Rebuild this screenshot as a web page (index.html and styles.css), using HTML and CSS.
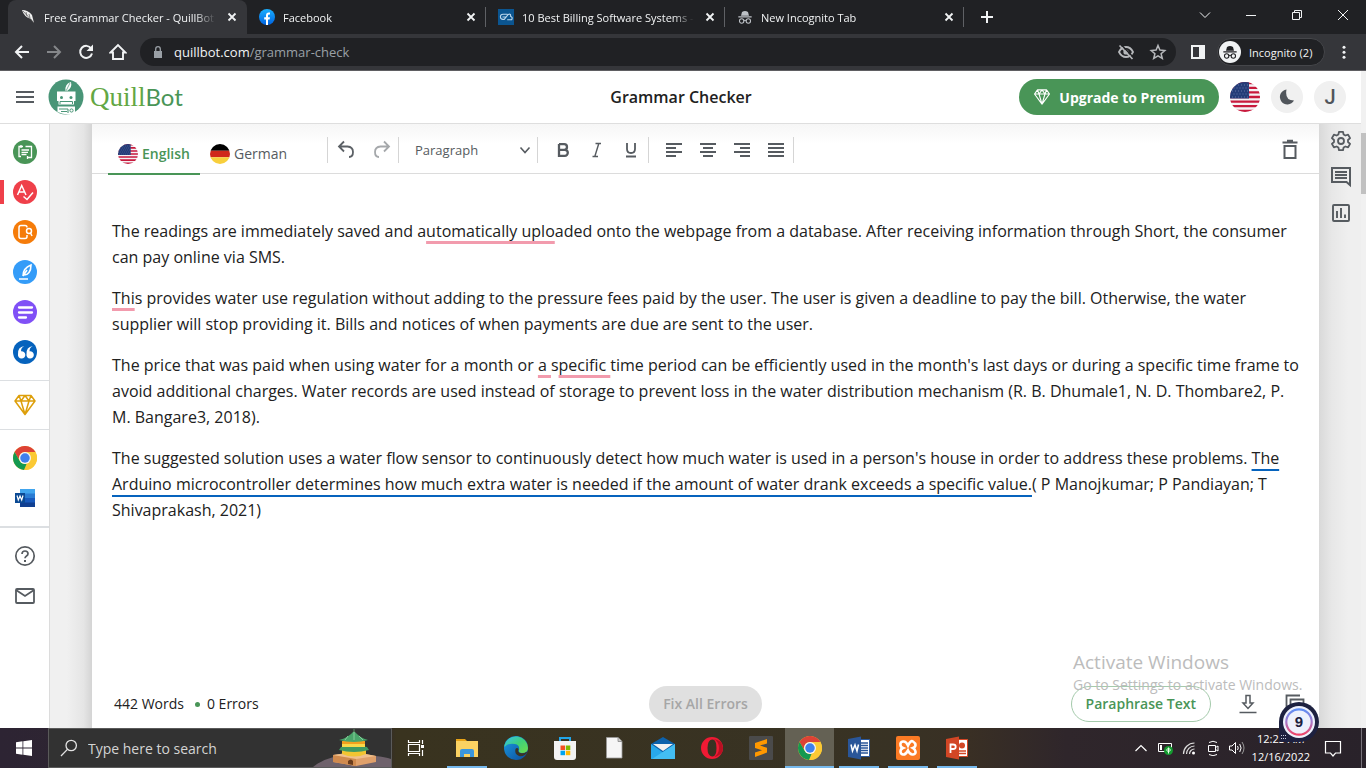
FILE: index.html
```
<!DOCTYPE html>
<html lang="en">
<head>
<meta charset="utf-8">
<meta name="viewport" content="width=device-width, initial-scale=1">
<title>Free Grammar Checker - QuillBot</title>
<link rel="stylesheet" href="styles.css">
</head>
<body>
<svg class="defs" width="0" height="0" aria-hidden="true">
  <defs>
    <clipPath id="disc"><circle cx="15" cy="15" r="15"/></clipPath>
    <linearGradient id="fb" x2="0" y2="1"><stop stop-color="#19afff"/><stop offset="1" stop-color="#0062e0"/></linearGradient>
    <linearGradient id="edge" x2="1" y2="1"><stop stop-color="#35c1f1"/><stop offset=".5" stop-color="#3fd07a"/><stop offset="1" stop-color="#6fdc4a"/></linearGradient>
    <linearGradient id="edgeb" x2="1" y2="1"><stop stop-color="#1b9de2"/><stop offset="1" stop-color="#0c4a9b"/></linearGradient>
    <linearGradient id="ring" x2="0" y2="1"><stop stop-color="#5f8ff5"/><stop offset=".5" stop-color="#a678c8"/><stop offset="1" stop-color="#f04468"/></linearGradient>
    <symbol id="x" viewBox="0 0 16 16"><path d="M4.500 4.500l7 7m0-7l-7 7" stroke="currentColor" stroke-width="1.800" fill="none"/></symbol>
    <symbol id="us" viewBox="0 0 30 30"><g clip-path="url(#disc)"><path fill="#f4f2f4" d="M0 0h30v30H0z"/><path stroke="#c8193c" stroke-width="2.300" d="M0 1.200h30M0 5.800h30M0 10.400h30M0 15h30M0 19.600h30M0 24.200h30M0 28.800h30"/><path fill="#243c78" d="M0 0h19v16.500H0z"/><path stroke="#6474a6" stroke-width="1" stroke-dasharray="1 2" d="M2 3h17M3.500 6h16M2 9h17M3.500 12h16M2 15h17"/></g></symbol>
    <symbol id="de" viewBox="0 0 30 30"><g clip-path="url(#disc)"><path d="M0 0h30v10H0z"/><path fill="#d0281c" d="M0 10h30v10H0z"/><path fill="#f8cf3c" d="M0 20h30v10H0z"/></g></symbol>
    <symbol id="gem" viewBox="0 0 24 24"><path d="M6 2.500h12l4 5.500-10 13.500L2 8zM2 8h20M6 2.500L8 8l4 13.500L16 8l2-5.500M8 8l4-5.500L16 8" fill="none" stroke="currentColor" stroke-width="1.500" stroke-linejoin="round"/></symbol>
    <symbol id="chrome" viewBox="0 0 48 48"><circle cx="24" cy="24" r="24" fill="#fbc934"/><path fill="#dd4236" d="M3.200 12A24 24 0 0 1 44.800 12H24a12 12 0 0 0-10.400 6L11 25.500z"/><path fill="#149950" d="M3.200 12l10.400 18A12 12 0 0 0 24 36h3l-5 11.900A24 24 0 0 1 3.200 12z"/><path fill="#fbc934" d="M44.800 12A24 24 0 0 1 23 48l11.400-18A12 12 0 0 0 24 12z"/><circle cx="24" cy="24" r="12" fill="#f5f5f5"/><circle cx="24" cy="24" r="9.500" fill="#3f80ec"/></symbol>
    <symbol id="spy" viewBox="0 0 24 24"><path d="M7.500 4.500Q12 1.500 16.500 4.500L18 10H6zM2 11h20v1.700H2z" fill="currentColor"/><g fill="none" stroke="currentColor" stroke-width="1.600"><circle cx="7" cy="18" r="3.300"/><circle cx="17" cy="18" r="3.300"/><path d="M10 17.500q2-1.200 4 0"/></g></symbol>
  </defs>
</svg>

<header class="browser">
  <div class="tabstrip">
    <div class="tab tab-active">
      <svg class="i16" viewBox="0 0 16 16"><path d="M2 1q6 0 10 5l2 8-3-4Q4 8 2 1z" fill="#f0f0f0"/><path d="M3 2l11 12M6 3l1 4M9 5l1 4" stroke="#555" stroke-width=".7"/></svg>
      <span class="tab-title">Free Grammar Checker - QuillBot</span>
      <button class="plain" aria-label="Close tab"><svg class="i16"><use href="#x"/></svg></button>
    </div>
    <div class="tab">
      <svg class="i16" viewBox="0 0 16 16"><circle cx="8" cy="8" r="8" fill="url(#fb)"/><path d="M7 16v-5.500H5.200V8.200H7V6.500Q7 3.600 9.700 3.600h1.300v2H10Q9 5.600 9 6.600v1.600h2l-.4 2.300H9V16z" fill="#fff"/></svg>
      <span class="tab-title">Facebook</span>
      <button class="plain" aria-label="Close tab"><svg class="i16"><use href="#x"/></svg></button>
    </div>
    <div class="tab">
      <svg class="i16" viewBox="0 0 16 16"><path fill="#0b5590" d="M0 0h16v16H0z"/><path d="M9.500 5.200H5a2.600 2.600 0 0 0 0 5.200h1.200l4-5q3-1 2.300 1.800 2.500.8 1.200 3.500H9.200M4.500 8h3.300" fill="none" stroke="#bcd8ee" stroke-width="1.100"/></svg>
      <span class="tab-title">10 Best Billing Software Systems -</span>
      <button class="plain" aria-label="Close tab"><svg class="i16"><use href="#x"/></svg></button>
    </div>
    <div class="tab">
      <svg class="i16 spy-tab"><use href="#spy"/></svg>
      <span class="tab-title">New Incognito Tab</span>
      <button class="plain" aria-label="Close tab"><svg class="i16"><use href="#x"/></svg></button>
    </div>
    <button class="plain new-tab" aria-label="New tab"><svg class="i16" viewBox="0 0 16 16"><path d="M8 2v12M2 8h12" stroke="currentColor" stroke-width="2"/></svg></button>
    <div class="window-buttons">
      <button class="plain" aria-label="Search tabs"><svg class="i16" viewBox="0 0 16 16"><path d="M3 5.500l5 5 5-5" fill="none" stroke="currentColor"/></svg></button>
      <button class="plain" aria-label="Minimize"><svg class="i16" viewBox="0 0 16 16"><path d="M3 8.500h10" stroke="currentColor"/></svg></button>
      <button class="plain" aria-label="Restore"><svg class="i16" viewBox="0 0 16 16"><path d="M3.500 5.500h7v7h-7zM5.500 5.500v-2h7v7h-2" fill="none" stroke="currentColor"/></svg></button>
      <button class="plain" aria-label="Close window"><svg class="i16" viewBox="0 0 16 16"><path d="M3 3l10 10M13 3L3 13" stroke="currentColor"/></svg></button>
    </div>
  </div>
  <div class="navbar">
    <button class="plain nav" aria-label="Back"><svg class="i18" viewBox="0 0 18 18"><path d="M16 9H3M9 3L3 9l6 6" fill="none" stroke="currentColor" stroke-width="2"/></svg></button>
    <button class="plain nav dim" aria-label="Forward"><svg class="i18" viewBox="0 0 18 18"><path d="M2 9h13M9 3l6 6-6 6" fill="none" stroke="currentColor" stroke-width="2"/></svg></button>
    <button class="plain nav" aria-label="Reload"><svg class="i18" viewBox="0 0 18 18"><path d="M14.200 5.500A6 6 0 1 0 15 10.500" fill="none" stroke="currentColor" stroke-width="2"/><path d="M16 1.500v6.500H9.500z" fill="currentColor"/></svg></button>
    <button class="plain nav" aria-label="Home"><svg class="i18" viewBox="0 0 18 18"><path d="M1.500 9.500L9 2l7.500 7.500H14V16H4V9.500z" fill="none" stroke="currentColor" stroke-width="1.900"/></svg></button>
    <div class="address">
      <svg class="i12" viewBox="0 0 12 12"><path fill="#9aa0a6" d="M2 5h8v7H2z"/><path d="M3.700 6V3a2.300 2.300 0 0 1 4.600 0v3" fill="none" stroke="#9aa0a6" stroke-width="1.300"/></svg>
      <p class="url">quillbot.com<span>/grammar-check</span></p>
      <button class="plain nav soft" aria-label="Third-party cookies blocked"><svg class="i18" viewBox="0 0 18 18"><path d="M2 9q2.500-5 7-5t7 5q-2.500 5-7 5T2 9z" fill="none" stroke="currentColor" stroke-width="1.800"/><circle cx="9" cy="9" r="2.600" fill="currentColor"/><path d="M4 1.500L17 15" stroke="#202124" stroke-width="1.500"/><path d="M2.500 2.500L15.500 16" stroke="currentColor" stroke-width="1.700"/></svg></button>
      <button class="plain nav soft" aria-label="Bookmark"><svg class="i18" viewBox="0 0 18 18"><path d="M9 2.500l1.900 4.600 4.900.4-3.700 3.200 1.200 4.800L9 12.900l-4.300 2.600 1.200-4.800-3.700-3.200 4.900-.4z" fill="none" stroke="currentColor" stroke-width="1.500"/></svg></button>
    </div>
    <button class="plain nav" aria-label="Side panel"><svg class="i16" viewBox="0 0 16 16"><path fill="currentColor" fill-rule="evenodd" d="M1 1h14v14H1zm2 2v10h6V3z"/></svg></button>
    <button class="profile"><span class="profile-icon"><svg class="i16"><use href="#spy"/></svg></span>Incognito (2)</button>
    <button class="plain nav" aria-label="Menu"><svg class="i16" viewBox="0 0 16 16"><g fill="currentColor"><circle cx="8" cy="3.200" r="1.500"/><circle cx="8" cy="8.200" r="1.500"/><circle cx="8" cy="13.200" r="1.500"/></g></svg></button>
  </div>
</header>

<div class="viewport">
<div class="app">
  <header class="app-header">
    <div class="brand">
      <button class="plain" aria-label="Open navigation"><svg class="i18" viewBox="0 0 18 18"><path d="M0 4h18M0 9h18M0 14h18" stroke="#565b60" stroke-width="1.800"/></svg></button>
      <a class="logo" href="#" aria-label="QuillBot">
        <svg class="robot" viewBox="0 0 36 36"><circle cx="18" cy="18" r="17.500" fill="#499577"/><path d="M17.500 12q-1-7 5.500-9 1.500 6-4 9z" fill="#fff"/><path d="M18 12l4-8" stroke="#499577" stroke-width=".7"/><path d="M9 12.500h18.500V22H26v3.500H10.500V22H9z" fill="#fff"/><path d="M12 25v-2.500h12.500V25" fill="none" stroke="#499577"/><g fill="#499577"><circle cx="13.500" cy="18.500" r="1.500"/><circle cx="23" cy="18.500" r="1.500"/></g><path d="M9.500 27.500h17.500v7Q18 37 9.500 33z" fill="#fff"/><path d="M11 30h9M13 32.500h6M20 30v4" stroke="#499577" stroke-width="1.100"/><circle cx="23.500" cy="31.500" r="1.600" fill="none" stroke="#499577"/></svg>
        <span class="wordmark">Quill<b>Bot</b></span>
      </a>
    </div>
    <h1>Grammar Checker</h1>
    <div class="account">
      <button class="upgrade"><svg class="i18"><use href="#gem"/></svg>Upgrade to Premium</button>
      <button class="plain" aria-label="Language"><svg class="flag-lg"><use href="#us"/></svg></button>
      <button class="round" aria-label="Dark mode"><svg class="i18" viewBox="0 0 18 18"><path d="M8.500 1.500A7.500 7.500 0 1 0 16 12.500Q6.500 12.500 8.500 1.500z" fill="#50555b"/></svg></button>
      <button class="round">J</button>
    </div>
  </header>

  <div class="workspace">
    <nav class="sidebar" aria-label="Tools">
      <div class="tools">
        <a href="#" aria-label="Paraphraser"><svg class="i24" viewBox="0 0 24 24"><circle cx="12" cy="12" r="12" fill="#499557"/><g fill="none" stroke="#fff" stroke-width="1.300"><path d="M10 6.500H6v10h2M14 17.500h4.500v-11h-6M8 5v3M14.500 16v3"/><path d="M8.500 10H16M8.500 12.300H15M8.500 14.500h5"/></g></svg></a>
        <a href="#" class="current" aria-label="Grammar checker"><svg class="i24" viewBox="0 0 24 24"><circle cx="12" cy="12" r="12" fill="#ef404a"/><path d="M4.500 15L8.700 5.500 13 15M6 12h5.500M10.500 16.500l3.500 3 6-7" fill="none" stroke="#fff" stroke-width="1.500"/></svg></a>
        <a href="#" aria-label="Plagiarism checker"><svg class="i24" viewBox="0 0 24 24"><circle cx="12" cy="12" r="12" fill="#f57c0a"/><g fill="none" stroke="#fff" stroke-width="1.500"><path d="M14 7.500Q14 5.500 12 5.500H8q-2 0-2 2v9q0 2 2 2h4q2 0 2-2V15"/><circle cx="16" cy="11" r="2.500"/><path d="M17.500 13l1.500 3"/></g></svg></a>
        <a href="#" aria-label="Co-writer"><svg class="i24" viewBox="0 0 24 24"><circle cx="12" cy="12" r="12" fill="#349cf8"/><path d="M10 16q0-8 8-11 0 5-2 7.500T11.500 15M10 16l4-6M6 19h9" fill="none" stroke="#fff" stroke-width="1.600"/></svg></a>
        <a href="#" aria-label="Summarizer"><svg class="i24" viewBox="0 0 24 24"><circle cx="12" cy="12" r="12" fill="#8050f6"/><path d="M6 7.500h13M6 12.500h13M6 17.500h7" stroke="#fff" stroke-width="2.300" stroke-linecap="round"/></svg></a>
        <a href="#" aria-label="Citation generator"><svg class="i24" viewBox="0 0 24 24"><circle cx="12" cy="12" r="12" fill="#0663bd"/><path d="M11.300 6Q8 7.500 8 11.200a3.700 3.700 0 1 1-3 3Q4.500 7 11.300 6zM19.800 6q-3.300 1.500-3.300 5.200a3.700 3.700 0 1 1-3 3Q13 7 19.800 6z" fill="#fff"/></svg></a>
      </div>
      <div class="premium"><a href="#" aria-label="Premium"><svg class="i24"><use href="#gem"/></svg></a></div>
      <div class="extensions">
        <a href="#" aria-label="Chrome extension"><svg class="i24"><use href="#chrome"/></svg></a>
        <a href="#" aria-label="Word add-in"><svg class="i24" viewBox="0 0 24 24"><path fill="#41a5ee" d="M7 3h15v5H7z"/><path fill="#2b7cd3" d="M7 7.500h15v5H7z"/><path fill="#185abd" d="M7 12h15v5H7z"/><path fill="#103f91" d="M7 16.500h15V21H7z"/><path fill="#0b4a94" d="M2 7h10v10H2z"/><path d="M4 9.500L5.300 14 7 10l1.700 4L10 9.500" fill="none" stroke="#fff" stroke-width="1.200"/></svg></a>
      </div>
      <div class="support">
        <a href="#" aria-label="Help"><svg class="i24" viewBox="0 0 24 24"><circle cx="12" cy="12" r="9.200" fill="none" stroke="#565b60" stroke-width="1.700"/><path d="M9 10q0-3 3-3t3 2.700q0 1.300-1.500 2.300T12 14.300" fill="none" stroke="#565b60" stroke-width="1.700"/><path stroke="#565b60" stroke-width="2" d="M12 16v2"/></svg></a>
        <a href="#" aria-label="Contact"><svg class="i24" viewBox="0 0 24 24"><rect x="3" y="5" width="18" height="14" rx="1" fill="none" stroke="#565b60" stroke-width="1.800"/><path d="M3 6l9 6 9-6" fill="none" stroke="#565b60" stroke-width="1.800"/></svg></a>
      </div>
    </nav>

    <div class="gutter"></div>

    <main class="editor">
      <div class="toolbar">
        <div class="languages">
          <button class="lang lang-on"><svg class="flag"><use href="#us"/></svg>English</button>
          <button class="lang"><svg class="flag"><use href="#de"/></svg>German</button>
        </div>
        <div class="group history">
          <button class="plain" aria-label="Undo"><svg class="i20" viewBox="0 0 20 20"><path d="M8 1.500L3 6.500l5 5M3 6.500h8.500q5.500.5 5.500 5.500t-4 5" fill="none" stroke="#5c6166" stroke-width="1.800"/></svg></button>
          <button class="plain" aria-label="Redo"><svg class="i20" viewBox="0 0 20 20"><path d="M12 1.500l5 5-5 5M17 6.500H8.500Q3 7 3 12t4 5" fill="none" stroke="#a5a8ab" stroke-width="1.800"/></svg></button>
        </div>
        <div class="group style-pick">
          <select aria-label="Paragraph style"><option>Paragraph</option><option>Heading 1</option></select>
          <svg class="i12" viewBox="0 0 12 12"><path d="M1.500 3.500l4.500 5 4.500-5" fill="none" stroke="#565b60" stroke-width="1.600"/></svg>
        </div>
        <div class="group format">
          <button class="plain" aria-label="Bold"><svg class="i20" viewBox="0 0 20 20"><path d="M6 4.200h5.200a2.800 2.800 0 0 1 0 5.600H6m0 0h5.800a3 3 0 0 1 0 6H6V4" fill="none" stroke="#565b60" stroke-width="2.300"/></svg></button>
          <button class="plain" aria-label="Italic"><svg class="i20" viewBox="0 0 20 20"><path d="M8.500 3.500H14M5.500 16.500H11M11.800 3.500l-4 13" fill="none" stroke="#565b60" stroke-width="1.400"/></svg></button>
          <button class="plain" aria-label="Underline"><svg class="i20" viewBox="0 0 20 20"><path d="M6 3v6q0 4 4 4t4-4V3M5 16.500h10" fill="none" stroke="#565b60" stroke-width="1.800"/></svg></button>
        </div>
        <div class="group format">
          <button class="plain" aria-label="Align left"><svg class="i20" viewBox="0 0 20 20"><path d="M2 4h16M2 8h10M2 12h16M2 16h10" stroke="#565b60" stroke-width="1.800"/></svg></button>
          <button class="plain" aria-label="Align center"><svg class="i20" viewBox="0 0 20 20"><path d="M2 4h16M5 8h10M2 12h16M5 16h10" stroke="#565b60" stroke-width="1.800"/></svg></button>
          <button class="plain" aria-label="Align right"><svg class="i20" viewBox="0 0 20 20"><path d="M2 4h16M8 8h10M2 12h16M8 16h10" stroke="#565b60" stroke-width="1.800"/></svg></button>
          <button class="plain" aria-label="Justify"><svg class="i20" viewBox="0 0 20 20"><path d="M2 4h16M2 8h16M2 12h16M2 16h16" stroke="#565b60" stroke-width="1.800"/></svg></button>
        </div>
        <div class="group tail"></div>
        <button class="plain trash" aria-label="Delete text"><svg class="i24" viewBox="0 0 24 24"><path d="M4.500 4.500h15M9 2.800h6" stroke="#565b60" stroke-width="2"/><path d="M6.500 8h11v12h-11z" fill="none" stroke="#565b60" stroke-width="2"/></svg></button>
      </div>

      <div class="text" contenteditable="true" spellcheck="false">
        <p>The readings are immediately saved and a<u>utomatically uplo</u>aded onto the webpage from a database. After receiving information through Short, the consumer<br>can pay online via SMS.</p>
        <p><u>Thi</u>s provides water use regulation without adding to the pressure fees paid by the user. The user is given a deadline to pay the bill. Otherwise, the water<br>supplier will stop providing it. Bills and notices of when payments are due are sent to the user.</p>
        <p>The price that was paid when using water for a month or <u>a </u>s<u>pecific </u>time period can be efficiently used in the month's last days or during a specific time frame to<br>avoid additional charges. Water records are used instead of storage to prevent loss in the water distribution mechanism (R. B. Dhumale1, N. D. Thombare2, P.<br>M. Bangare3, 2018).</p>
        <p>The suggested solution uses a water flow sensor to continuously detect how much water is used in a person's house in order to address these problems. <u class="blue">The<br>Arduino microcontroller determines how much extra water is needed if the amount of water drank exceeds a specific value.</u>( P Manojkumar; P Pandiayan; T<br>Shivaprakash, 2021)</p>
      </div>

      <div class="editor-footer">
        <p class="counts"><span>442 Words</span><span>0 Errors</span></p>
        <button class="fix" disabled>Fix All Errors</button>
        <div class="actions">
          <button class="paraphrase">Paraphrase Text</button>
          <button class="plain" aria-label="Download"><svg class="i20" viewBox="0 0 20 20"><path d="M8 1.500h4V9h3l-5 5.500L5 9h3zM1.500 18.500h17" fill="none" stroke="#565b60" stroke-width="1.500"/></svg></button>
          <button class="plain" aria-label="Copy"><svg class="i20" viewBox="0 0 20 20"><path d="M1.500 15V1.500H15M5.500 5.500h13v13h-13z" fill="none" stroke="#565b60" stroke-width="1.800"/></svg></button>
        </div>
      </div>
    </main>

    <aside class="rail">
      <button class="plain" aria-label="Settings"><svg class="i24" viewBox="0 0 24 24"><path d="M10 2.800h4l.6 2.700 1.800 1 2.700-.8 2 3.400-2.100 1.900v2l2.100 1.900-2 3.400-2.700-.8-1.800 1-.6 2.700h-4l-.6-2.700-1.800-1-2.700.8-2-3.400L5 13v-2L2.900 9.100l2-3.400 2.700.8 1.800-1z" fill="none" stroke="#565b60" stroke-width="1.800" stroke-linejoin="round"/><circle cx="12" cy="12" r="3" fill="none" stroke="#565b60" stroke-width="1.800"/></svg></button>
      <button class="plain" aria-label="Comments"><svg class="i24" viewBox="0 0 24 24"><path d="M3 3h18v17l-3.500-3H3z" fill="none" stroke="#565b60" stroke-width="2"/><path d="M6 7h12M6 10h12M6 13h12" stroke="#565b60" stroke-width="1.800"/></svg></button>
      <button class="plain" aria-label="Statistics"><svg class="i24" viewBox="0 0 24 24"><rect x="4" y="4" width="16" height="16" rx="1" fill="none" stroke="#565b60" stroke-width="1.900"/><path d="M8 10v7M12 7v10M16 13.500V17" stroke="#565b60" stroke-width="1.900"/></svg></button>
    </aside>
  </div>
</div>
<div class="scrollbar"><div class="thumb"></div></div>
<div class="watermark"><strong>Activate Windows</strong><span>Go to Settings to activate Windows.</span></div>
<div class="badge"><svg viewBox="0 0 40 40"><path d="M20 0a20 20 0 1 1 0 40H4q-4 0-4-4V20A20 20 0 0 1 20 0z" fill="#1d2140"/><circle cx="20" cy="20" r="16" fill="#eef1fc"/><circle cx="20" cy="20" r="12.700" fill="none" stroke="url(#ring)" stroke-width="2.200"/><path d="M2 33.500h5M2 36.500h5" stroke="#c8cce0" stroke-width="1" stroke-dasharray="1 1"/></svg><span>9</span></div>
</div>

<footer class="taskbar">
  <button class="plain start" aria-label="Start"><svg class="i16" viewBox="0 0 16 16"><path d="M0 2.300l6.500-1v6.300H0zM7.300 1.200L16 0v7.600H7.300zM0 8.400h6.500v6.300L0 13.700zM7.300 8.400H16V16l-8.700-1.200z" fill="#fff"/></svg></button>
  <div class="search">
    <svg class="i18" viewBox="0 0 18 18"><circle cx="11.200" cy="6.500" r="5.200" fill="none" stroke="#e4e4e4" stroke-width="1.300"/><path d="M7.400 10.400L1 17" stroke="#e4e4e4" stroke-width="1.300"/></svg>
    <input type="text" placeholder="Type here to search" aria-label="Type here to search">
    <svg class="temple" viewBox="0 0 78 38"><path d="M0 38Q14 26 40 26t38 4v8z" fill="#6f626c"/><path d="M20 26l22-3 21 4v6l-20 4-23-4z" fill="#e0a06a"/><path d="M20 26l23 3v8l-23-4z" fill="#d08a4e"/><path d="M20 26l22-3 21 4-20 3z" fill="#f0c08c"/><path d="M29 19h24v6q-12 5-24 0z" fill="#f2c531"/><path d="M28 18l13-2 13 2 2 3q-15 4-30 0z" fill="#3f9a62"/><path d="M29 12h23v6H29z" fill="#f2a01e"/><path d="M29 15h23v3H29z" fill="#f9d849"/><path d="M26 11q9-2 15-9 6 7 14 9-14 4-29 0z" fill="#4aa66b"/><path d="M41 3v8M35 7l-3 4M46 7l4 4" stroke="#87cf9b"/><path d="M41 0v3" stroke="#4c6c50" stroke-width="1.500"/><path d="M35 35v-3q3-3 5 0v4z" fill="#6b3c1b"/></svg>
  </div>
  <button class="plain task-view" aria-label="Task view"><svg class="i18" viewBox="0 0 18 18"><path d="M1.500 1v2.500h11V1M1.500 17v-2.500h11V17M1.500 5.500h11v7h-11zM15.500 1v4M15.500 11v6" fill="none" stroke="#fff" stroke-width="1.200"/><path d="M14 6h3v3h-3z" fill="#fff"/></svg></button>
  <button class="plain app-icon open" aria-label="File Explorer"><svg class="i24" viewBox="0 0 24 24"><path fill="#e8a317" d="M1 3h9l2 2H1z"/><path fill="#fbd262" d="M1 5h22v16H1z"/><path d="M5 21v-6q0-2 2-2h10q2 0 2 2v6h-4v-3H9v3z" fill="#3a96dd"/></svg></button>
  <button class="plain app-icon" aria-label="Edge"><svg class="i24" viewBox="0 0 24 24"><circle cx="12" cy="12" r="12" fill="url(#edgeb)"/><path d="M.5 9A12 12 0 0 1 24 12q0 5-6 5-4 0-3-3 1-5-4-6Q5 6.500.5 11z" fill="url(#edge)"/><path d="M14.500 13q-1.500 4 3.500 4.300 3 0 4.500-1.500l.5 1Q20 21 15 20q-5-2-3.500-7 1.500-2 3 0z" fill="#3a3426"/></svg></button>
  <button class="plain app-icon" aria-label="Microsoft Store"><svg class="i24" viewBox="0 0 24 24"><path d="M7 6V2h10v4" fill="none" stroke="#22a5e8" stroke-width="2"/><path d="M1 5h22v16q0 3-3 3H4q-3 0-3-3z" fill="#f3f3f3"/><path fill="#f25022" d="M7.500 9.500H12V14H7.500z"/><path fill="#7fba00" d="M12.800 9.500h4.500V14h-4.500z"/><path fill="#00a4ef" d="M7.500 14.700H12v4.500H7.500z"/><path fill="#ffb900" d="M12.800 14.700h4.500v4.500h-4.500z"/></svg></button>
  <button class="plain app-icon" aria-label="Document"><svg class="i24" viewBox="0 0 24 24"><path d="M4.500 1.500H16l4 4V22H4.500z" fill="#f5f5f5" stroke="#999" stroke-width=".8"/><path d="M16 1.500v4h4" fill="#ccc" stroke="#888" stroke-width=".8"/></svg></button>
  <button class="plain app-icon" aria-label="Mail"><svg class="i24" viewBox="0 0 24 24"><path d="M0 8l12-7 12 7v15H0z" fill="#0d62ac"/><path d="M0 8l12 8.500L24 8v15H0z" fill="#28a8ea"/><path d="M24 8v15H1z" fill="#43bdf3"/><path d="M2 8h20l-10 7z" fill="#f2f2f2"/></svg></button>
  <button class="plain app-icon" aria-label="Opera"><svg class="i24" viewBox="0 0 24 24"><path fill="#f01a34" fill-rule="evenodd" d="M12 1a11 11 0 1 1 0 22 11 11 0 0 1 0-22zm0 2.500Q7.500 4 7.500 12t4.500 8.500 4.500-8.500T12 3.500z"/><path d="M13 3Q19 5 19 12t-6 9q10-1 10-9T13 3z" fill="#b81022"/></svg></button>
  <button class="plain app-icon" aria-label="Sublime Text"><svg class="i24" viewBox="0 0 24 24"><rect width="24" height="24" rx="1" fill="#4a4a4a"/><path d="M6 7l12-4v4.500l-7 2 7 2.300v4.700L6 21v-4.500l7-2.200-7-2.300z" fill="#ff9800"/></svg></button>
  <button class="plain app-icon open active" aria-label="Chrome"><svg class="i24"><use href="#chrome"/></svg></button>
  <button class="plain app-icon open" aria-label="Word"><svg class="i24" viewBox="0 0 24 24"><path fill="#fff" stroke="#2a5699" d="M12 3.500h10.500v17H12z"/><path d="M13 7h8M13 9.500h8M13 12h8M13 14.500h8M13 17h8" stroke="#2a5699" stroke-width="1.300"/><path d="M1 3l13-2.500v23L1 21z" fill="#2a5699"/><path d="M4 8.500L5.500 15 8 9l2 6 1.500-6.500" fill="none" stroke="#fff" stroke-width="1.500"/></svg></button>
  <button class="plain app-icon open" aria-label="XAMPP"><svg class="i24" viewBox="0 0 24 24"><rect width="24" height="24" rx="2" fill="#fb7a24"/><path d="M12 9.500Q10 5 7 5.500T4.500 9q0 2 2.500 3-2.500 1-2.500 3.500t2.500 3 5-4q2 4.500 5 4t2.500-3T17 12q2.500-1 2.500-3T17 5.500t-5 4z" fill="none" stroke="#fff" stroke-width="2.600"/></svg></button>
  <button class="plain app-icon open" aria-label="PowerPoint"><svg class="i24" viewBox="0 0 24 24"><path fill="#fff" stroke="#d24625" d="M12 3.500h10.500v17H12z"/><circle cx="17" cy="9.500" r="3" fill="#d24625"/><path d="M14 15h7M14 17.500h7" stroke="#d24625" stroke-width="1.300"/><path d="M1 3l13-2.500v23L1 21z" fill="#d24625"/><path d="M5.500 17V8.500H8q2.700 0 2.700 2.300T8 13H5.500" fill="none" stroke="#fff" stroke-width="1.800"/></svg></button>
  <div class="tray">
    <button class="plain" aria-label="Show hidden icons"><svg class="i16" viewBox="0 0 16 16"><path d="M2.500 11L8 5.500l5.500 5.500" fill="none" stroke="#fff" stroke-width="1.200"/></svg></button>
    <button class="plain" aria-label="Battery"><svg class="i16" viewBox="0 0 16 16"><path d="M1.500 3.500h13v8h-13z" fill="none" stroke="#fff"/><path d="M3 5h2v5H3z" fill="#fff"/><circle cx="11.500" cy="10.500" r="4.500" fill="#149a2f"/><path d="M11.500 7.500v6M9.500 10l2-2 2 2-2 2z" fill="none" stroke="#e5ffe5"/></svg></button>
    <button class="plain" aria-label="Network"><svg class="i16" viewBox="0 0 16 16"><path d="M2.500 14A11 11 0 0 1 13.500 3M5.500 14a8 8 0 0 1 8-8M8.500 14a5 5 0 0 1 5-5" fill="none" stroke="#ddd" stroke-width="1.200"/><circle cx="12.500" cy="13" r="1.500" fill="#fff"/></svg></button>
    <button class="plain" aria-label="Meet Now"><svg class="i16" viewBox="0 0 16 16"><path d="M3.500 5.500h7v6h-7zM10.500 7.500L13 6v5l-2.500-1.500M4 2.500q4-2.500 8 0M4 14.500q4 2.500 8 0" fill="none" stroke="#fff"/></svg></button>
    <button class="plain" aria-label="Volume"><svg class="i16" viewBox="0 0 16 16"><path d="M.5 6v4H3l3.500 3.500v-11L3 6zM8.500 6q1.500 2 0 4M10.700 4q2.800 4 0 8" fill="none" stroke="#fff"/><path d="M13 2q4 6 0 12" fill="none" stroke="#999"/></svg></button>
    <p class="clock"><span>12:23 AM</span><span>12/16/2022</span></p>
    <button class="plain notices" aria-label="Notifications"><svg class="i18" viewBox="0 0 18 18"><path d="M1.500 2.500h15v11.500h-5L9 17l-2.500-3h-5z" fill="none" stroke="#fff" stroke-width="1.200"/></svg></button>
  </div>
</footer>
</body>
</html>
```

FILE: styles.css
```
* { box-sizing: border-box; }

body {
  margin: 0;
  min-height: 100vh;
  display: flex;
  flex-direction: column;
  font-family: "Open Sans", "Noto Sans", sans-serif;
  font-size: 14px;
  color: #212121;
  background: #fff;
}

p, h1 { margin: 0; }
button, input, select { font: inherit; color: inherit; }
a { display: flex; color: inherit; text-decoration: none; }
svg { display: block; flex: none; }
.defs { position: absolute; }

.i12 { width: 12px; height: 12px; }
.i16 { width: 16px; height: 16px; }
.i18 { width: 18px; height: 18px; }
.i20 { width: 20px; height: 20px; }
.i24 { width: 24px; height: 24px; }

.plain {
  display: flex;
  align-items: center;
  justify-content: center;
  padding: 0;
  border: 0;
  background: none;
}

/* Browser frame */
.browser { color: #f1f3f4; font-size: 11px; }
.tabstrip { display: flex; height: 34px; padding-left: 8px; background: #202124; }
.tab {
  display: flex;
  align-items: center;
  gap: 8px;
  flex: 0 1 239px;
  min-width: 0;
  padding: 0 7px 0 12px;
  background: linear-gradient(#5f6165, #5f6165) right center / 1px 20px no-repeat;
}
.tab-active { background: #35363a; border-radius: 8px 8px 0 0; }
.tab-title {
  flex: 1;
  min-width: 0;
  overflow: hidden;
  white-space: nowrap;
  mask-image: linear-gradient(90deg, #000 88%, transparent);
}
.spy-tab { color: #bdc1c6; }
.new-tab { width: 46px; }
.window-buttons { display: flex; margin-left: auto; }
.window-buttons button { width: 46px; height: 30px; }

.navbar {
  display: flex;
  align-items: center;
  height: 37px;
  padding: 0 6px;
  background: #35363a;
  border-bottom: 1px solid #5f5e62;
}
.nav { width: 32px; height: 28px; }
.dim { color: #85878a; }
.soft { color: #b6b8bb; }
.address {
  display: flex;
  align-items: center;
  flex: 1;
  height: 28px;
  margin: 0 6px;
  padding: 0 2px 0 12px;
  border-radius: 14px;
  background: #202124;
}
.url { flex: 1; margin-left: 10px; font-size: 13px; }
.url span { color: #9aa0a6; }
.profile {
  display: flex;
  align-items: center;
  gap: 8px;
  height: 28px;
  min-width: 108px;
  margin: 0 3px;
  padding: 0 10px 0 1px;
  border: 1px solid #45464a;
  border-radius: 14px;
  background: #202124;
}
.profile-icon {
  display: grid;
  place-items: center;
  width: 22px;
  height: 22px;
  border-radius: 50%;
  background: #f1f3f4;
  color: #202124;
}

/* Page */
.viewport { position: relative; flex: 1; display: flex; }
.app { flex: 1; min-width: 0; display: flex; flex-direction: column; }
.scrollbar { width: 5px; padding-top: 62px; background: #f1f1f1; }
.thumb { height: 61px; background: #c1c1c1; }

.app-header {
  display: grid;
  grid-template-columns: 1fr auto 1fr;
  align-items: center;
  height: 53px;
  padding: 0 15px 0 16px;
  border-bottom: 1px solid #dedede;
}
.app-header h1 { font-size: 16px; font-weight: 600; line-height: 24px; }
.brand { display: flex; align-items: center; gap: 14px; }
.logo { align-items: center; gap: 6px; }
.robot { width: 36px; height: 36px; }
.wordmark { font: 27px/36px "Liberation Serif", serif; color: #63a744; }
.wordmark b { font: 24px/36px Lato, sans-serif; color: #499557; }
.account { display: flex; align-items: center; justify-content: flex-end; gap: 11px; }
.upgrade {
  display: flex;
  align-items: center;
  gap: 8px;
  height: 36px;
  padding: 0 14px;
  border: 0;
  border-radius: 18px;
  background: #499557;
  color: #fff;
  font-weight: 700;
  white-space: nowrap;
}
.flag-lg { width: 30px; height: 30px; }
.round {
  display: grid;
  place-items: center;
  width: 32px;
  height: 32px;
  padding: 0;
  border: 0;
  border-radius: 50%;
  background: #f0f0f0;
  color: #50555b;
  font: 500 20px/24px Roboto, sans-serif;
}

.workspace { flex: 1; display: flex; }
.sidebar { width: 50px; border-right: 1px solid #dcdcdc; }
.sidebar > div {
  display: flex;
  flex-direction: column;
  align-items: center;
  border-bottom: 1px solid #dcdfe2;
}
.sidebar .tools { gap: 16px; padding: 16px 0; }
.tools a { width: 100%; justify-content: center; }
.tools .current { background: linear-gradient(#ef404a, #ef404a) left / 4px 24px no-repeat; }
.sidebar .premium { padding: 12px 0; color: #dd9f0b; }
.sidebar .extensions { gap: 16px; padding: 16px 0; border-bottom-width: 2px; }
.sidebar .support { gap: 16px; padding: 16px 0; border-bottom: 0; }
.gutter { width: 42px; background: linear-gradient(90deg, #f0f0f0 40%, #e5e5e5 80%, #d4d4d4); }
.rail {
  display: flex;
  flex-direction: column;
  align-items: center;
  gap: 12px;
  width: 42px;
  padding: 5px 0 0 2px;
  background: linear-gradient(90deg, #d9d9d9, #e7e7e7 30%, #efefef 70%);
}

.editor {
  flex: 1;
  min-width: 0;
  display: flex;
  flex-direction: column;
  background: linear-gradient(#f6f6f6, #fff 20px);
}
.toolbar {
  display: flex;
  align-items: center;
  height: 50px;
  padding: 2px 17px 0 16px;
  border-bottom: 1px solid #dcdcdc;
  color: #565b60;
}
.languages { display: flex; align-self: stretch; margin-right: 35px; }
.lang {
  display: flex;
  align-items: center;
  gap: 4px;
  width: 92px;
  height: 49px;
  padding: 8px 10px 0;
  border: 0;
  border-bottom: 2px solid transparent;
  background: none;
}
.lang-on { border-color: #499557; color: #499557; font-weight: 600; }
.flag { width: 20px; height: 20px; }
.group { display: flex; align-items: center; height: 26px; border-left: 1px solid #d5d5d5; }
.history { width: 71px; }
.history button { width: 36px; flex: none; }
.style-pick { display: grid; width: 139px; }
.style-pick > * { grid-area: 1 / 1; }
.style-pick svg { justify-self: end; align-self: center; margin-right: 6px; pointer-events: none; }
.style-pick select {
  width: 100%;
  padding: 0 16px;
  border: 0;
  appearance: none;
  background: none;
  font-size: 13px;
}
.format { padding-left: 8px; }
.format button { width: 34px; }
.trash { margin-left: auto; }

.text { flex: 1; padding: 44px 20px 16px; font-size: 16px; line-height: 26px; outline: 0; }
.text p { margin-bottom: 15px; }
.text u {
  text-decoration: underline 3px #f29bad;
  text-underline-offset: 4px;
  text-decoration-skip-ink: none;
}
.text .blue { text-decoration-color: #0663bd; text-decoration-thickness: 2px; text-underline-offset: 5px; }

.editor-footer {
  display: grid;
  grid-template-columns: 1fr auto 1fr;
  align-items: center;
  padding: 6px 14px;
  font-weight: 600;
}
.counts { display: flex; padding-left: 8px; font-weight: 500; line-height: 20px; }
.counts span + span::before {
  content: "";
  display: inline-block;
  width: 5px;
  height: 5px;
  margin: 0 7px 2px 11px;
  border-radius: 50%;
  background: #499557;
}
.fix, .paraphrase { height: 36px; padding: 0 14px; border: 0; border-radius: 18px; font-weight: 600; line-height: 20px; }
.fix { background: #e0e0e0; color: #a6a6a6; }
.paraphrase { border: 1px solid #a4caab; background: none; color: #499557; }
.actions { display: flex; align-items: center; justify-content: flex-end; gap: 27px; }

.watermark {
  position: absolute;
  right: 58px;
  bottom: 32px;
  display: flex;
  flex-direction: column;
  width: 235px;
  color: #bcbcbc;
  white-space: nowrap;
  pointer-events: none;
}
.watermark strong { font-size: 19px; font-weight: 400; line-height: 24px; }
.watermark span { line-height: 22px; }
.badge {
  position: absolute;
  z-index: 1;
  right: 47px;
  bottom: -14px;
  display: grid;
  place-items: center;
  width: 40px;
  height: 40px;
}
.badge > * { grid-area: 1 / 1; }
.badge span { font: 700 15px/20px "Liberation Sans", sans-serif; color: #1d2140; }

/* Taskbar */
.taskbar {
  display: flex;
  height: 40px;
  color: #fff;
  background: linear-gradient(90deg, #2d2433, #30272e 28%, #39331f 29%, #383224 66%, #392f24 71%, #2f262b 78%, #29222a);
}
.start { width: 48px; }
.search {
  display: flex;
  align-items: center;
  gap: 10px;
  width: 344px;
  padding-left: 11px;
  border: 1px solid #5a5a5a;
  background: #323232;
}
.search input {
  flex: 1;
  min-width: 0;
  padding: 0;
  border: 0;
  background: none;
  font-size: 14px;
}
.search input::placeholder { color: #d4d4d4; opacity: 1; }
.temple { width: 78px; height: 38px; }
.task-view { width: 48px; margin-right: 2px; }
.app-icon { width: 49px; }
.open { background: linear-gradient(#76b9ed, #76b9ed) center bottom / 40px 2px no-repeat; }
.active { background: linear-gradient(#76b9ed, #76b9ed) bottom / 100% 2px no-repeat, #646154; }
.tray { display: flex; align-items: center; margin-left: auto; border-right: 1px solid #77727a; margin-right: 4px; }
.tray > button { width: 24px; height: 40px; }
.clock {
  display: flex;
  flex-direction: column;
  align-items: center;
  margin-left: 3px;
  font-size: 11px;
  line-height: 18px;
}
.tray .notices { width: 28px; margin: 0 14px 0 9px; }
```
